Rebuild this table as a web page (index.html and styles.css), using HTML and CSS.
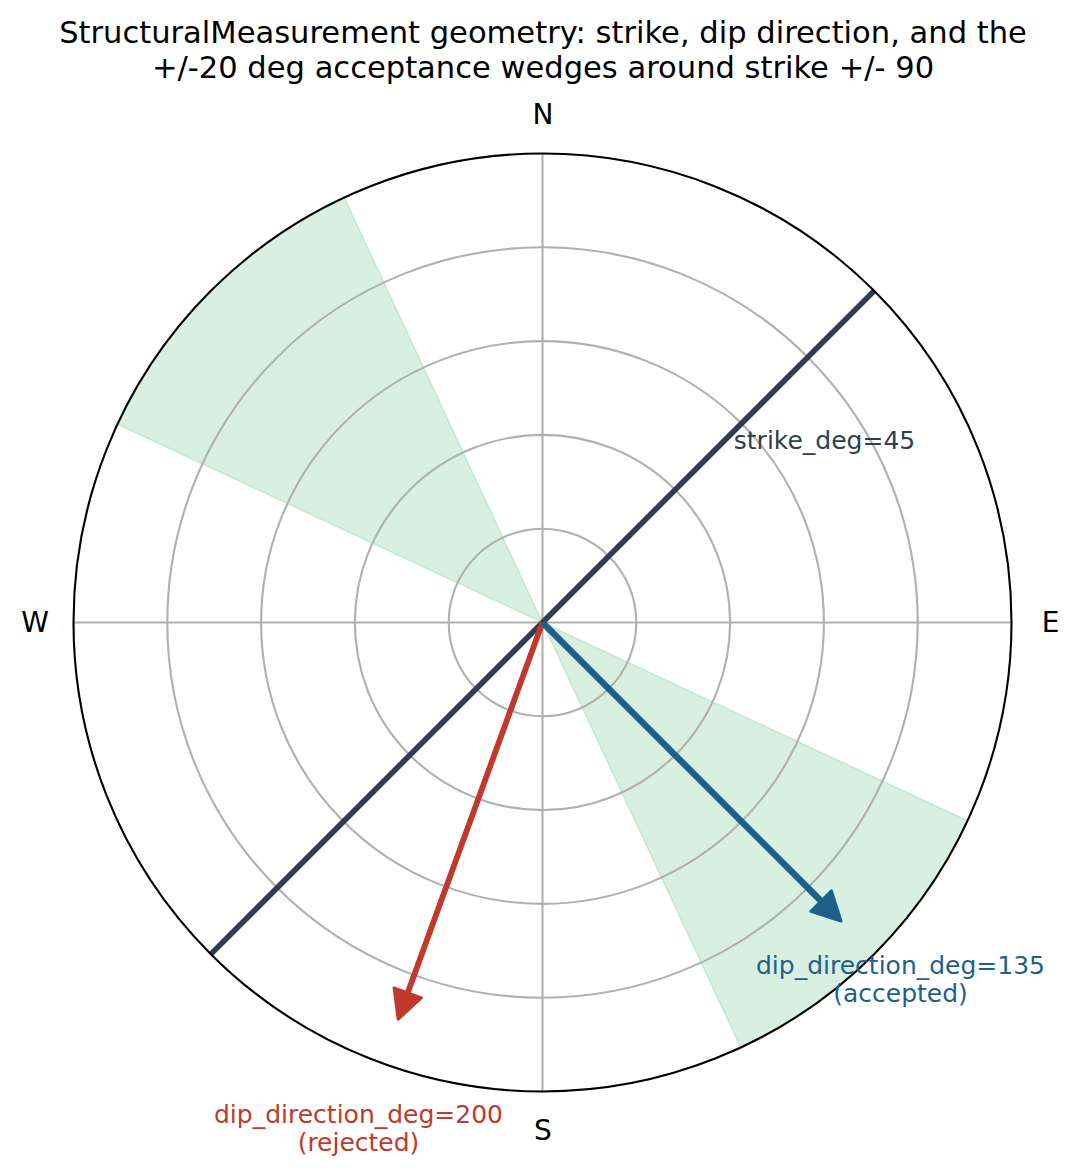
FILE: index.html
```html
<!DOCTYPE html>
<html>
<head>
<meta charset="utf-8">
<link rel="stylesheet" href="styles.css">
</head>
<body>
<div class="figure">
  <h1 class="title">StructuralMeasurement geometry: strike, dip direction, and the<br>+/-20 deg acceptance wedges around strike +/- 90</h1>
  <svg class="plot" viewBox="0 85 1080 1091" width="1080" height="1091" xmlns="http://www.w3.org/2000/svg">
    <!-- acceptance wedges -->
    <path class="wedge" d="M542.5 622.5 L967.56 820.71 A469 469 0 0 1 740.71 1047.56 Z"/>
    <path class="wedge" d="M542.5 622.5 L117.44 424.29 A469 469 0 0 1 344.29 197.44 Z"/>
    <!-- grid -->
    <g class="grid">
      <circle cx="542.5" cy="622.5" r="93.8"/>
      <circle cx="542.5" cy="622.5" r="187.6"/>
      <circle cx="542.5" cy="622.5" r="281.4"/>
      <circle cx="542.5" cy="622.5" r="375.2"/>
      <line x1="542.5" y1="622.5" x2="542.5" y2="153.5"/>
      <line x1="542.5" y1="622.5" x2="1011.5" y2="622.5"/>
      <line x1="542.5" y1="622.5" x2="542.5" y2="1091.5"/>
      <line x1="542.5" y1="622.5" x2="73.5" y2="622.5"/>
    </g>
    <!-- strike line -->
    <line class="strike" x1="874.13" y1="290.87" x2="210.87" y2="954.13"/>
    <!-- rejected dip arrow -->
    <line class="arrow-red" x1="542.5" y1="622.5" x2="407.71" y2="992.83"/>
    <polygon class="head-red" points="398.13,1019.14 421.34,997.79 394.08,987.87"/>
    <!-- accepted dip arrow -->
    <line class="arrow-blue" x1="542.5" y1="622.5" x2="821.17" y2="901.17"/>
    <polygon class="head-blue" points="840.97,920.97 810.92,911.42 831.42,890.92"/>
    <!-- spine -->
    <circle class="spine" cx="542.5" cy="622.5" r="469"/>
    <!-- tick labels -->
    <text class="tick" x="543" y="123.5">N</text>
    <text class="tick" x="1050.5" y="631.5">E</text>
    <text class="tick" x="543" y="1140">S</text>
    <text class="tick" x="35" y="631.5">W</text>
    <!-- annotations -->
    <text class="note note-dark" x="824.5" y="449">strike_deg=45</text>
    <text class="note note-blue" x="900.5" y="974">dip_direction_deg=135</text>
    <text class="note note-blue" x="900.5" y="1002">(accepted)</text>
    <text class="note note-red" x="358.5" y="1123">dip_direction_deg=200</text>
    <text class="note note-red" x="358.5" y="1151">(rejected)</text>
  </svg>
</div>
</body>
</html>
```
FILE: styles.css
```css
html, body {
  margin: 0;
  padding: 0;
  background: #ffffff;
}
.figure {
  width: 1080px;
  height: 1176px;
  display: flex;
  flex-direction: column;
  overflow: hidden;
}
.title {
  margin: 0;
  padding-top: 15px;
  padding-left: 6px;
  font-family: "DejaVu Sans", sans-serif;
  font-weight: normal;
  font-size: 30.56px;
  line-height: 35px;
  text-align: center;
  white-space: nowrap;
  color: #000000;
}
.plot {
  display: block;
}
.wedge {
  fill: #27ae60;
  fill-opacity: 0.18;
  stroke: #27ae60;
  stroke-opacity: 0.18;
  stroke-width: 1.5;
}
.grid circle,
.grid line {
  fill: none;
  stroke: #b0b0b0;
  stroke-width: 2.1;
}
.strike {
  stroke: #2c3e50;
  stroke-width: 5.6;
  stroke-linecap: butt;
}
.arrow-red {
  stroke: #c0392b;
  stroke-width: 5.8;
}
.head-red {
  fill: #c0392b;
  stroke: #c0392b;
  stroke-width: 3;
  stroke-linejoin: round;
}
.arrow-blue {
  stroke: #1f5f8b;
  stroke-width: 6.5;
}
.head-blue {
  fill: #1f5f8b;
  stroke: #1f5f8b;
  stroke-width: 3;
  stroke-linejoin: round;
}
.spine {
  fill: none;
  stroke: #000000;
  stroke-width: 2.1;
}
.tick {
  font-family: "DejaVu Sans", sans-serif;
  font-size: 28px;
  text-anchor: middle;
  fill: #000000;
}
.note {
  font-family: "DejaVu Sans", sans-serif;
  font-size: 25px;
  text-anchor: middle;
}
.note-dark { fill: #2c3e50; }
.note-blue { fill: #1f5f8b; }
.note-red { fill: #c0392b; }
```
